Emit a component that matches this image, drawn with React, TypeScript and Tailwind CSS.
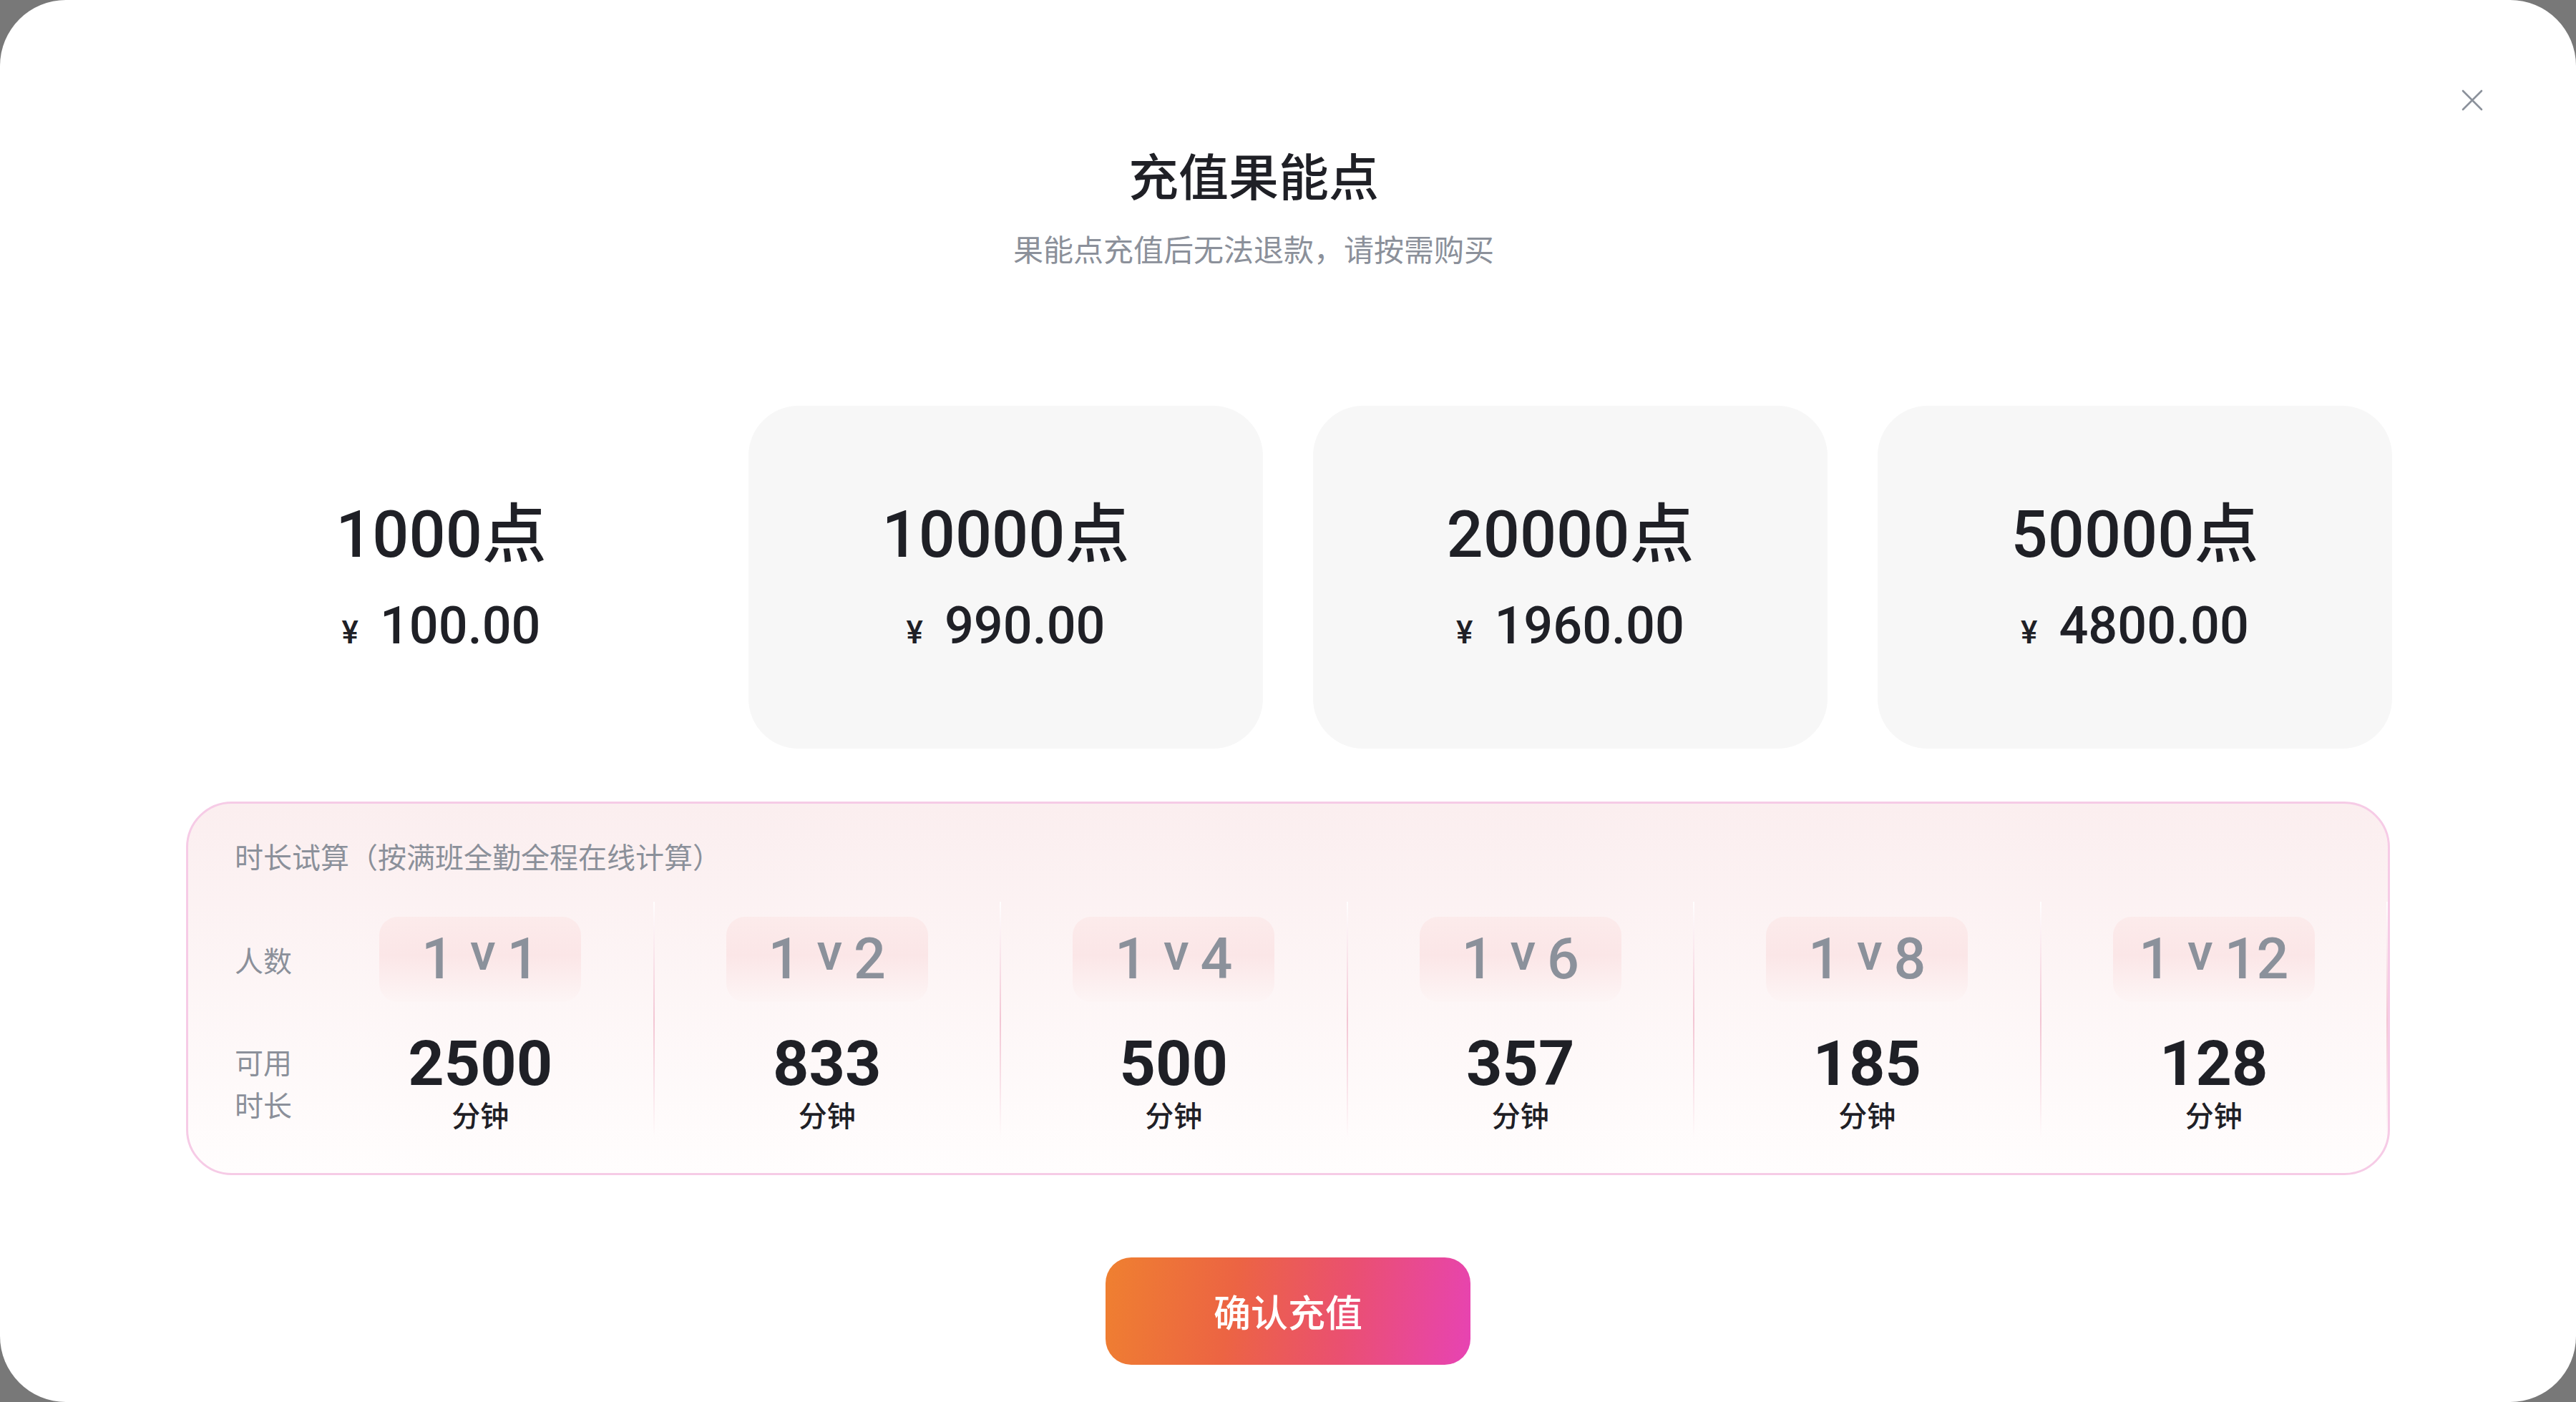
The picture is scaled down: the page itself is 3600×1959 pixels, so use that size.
import React from "react";

const cards = [
  { pts: "1000", price: "100.00", active: false },
  { pts: "10000", price: "990.00", active: true },
  { pts: "20000", price: "1960.00", active: true },
  { pts: "50000", price: "4800.00", active: true },
];

const cols = [
  { n: "1", mins: "2500" },
  { n: "2", mins: "833" },
  { n: "4", mins: "500" },
  { n: "6", mins: "357" },
  { n: "8", mins: "185" },
  { n: "12", mins: "128" },
];

function Card({ pts, price, active }: { pts: string; price: string; active: boolean }) {
  return (
    <div
      className={
        "flex-1 h-[479px] rounded-[70px] flex flex-col items-center justify-center gap-[46px] " +
        (active ? "bg-[#f7f7f7]" : "bg-white")
      }
    >
      <div className="h-[90px] text-[90px] leading-[90px] font-medium text-[#1f2026] font-['Roboto','Noto_Sans_CJK_SC',sans-serif]">
        {pts}点
      </div>
      <div className="h-[72px] flex items-baseline text-[#1f2026] font-['Roboto','Noto_Sans_CJK_SC',sans-serif]">
        <span className="text-[44px] leading-[72px] font-medium">¥</span>
        <span className="ml-[30px] text-[72px] leading-[72px] font-medium">{price}</span>
      </div>
    </div>
  );
}

function Column({ n, mins }: { n: string; mins: string }) {
  return (
    <div className="flex-1 flex flex-col items-center pt-[21px]">
      <div className="w-[282px] h-[119px] rounded-[26px] bg-[linear-gradient(to_bottom,#fcebeb,#fbe6e7_45%,#fdf5f5)] flex items-center justify-center">
        <div className="flex items-baseline text-[#8b919b] font-medium font-['Roboto',sans-serif] leading-none">
          <span className="text-[79px]">1</span>
          <span className="text-[72px] ml-[23px] relative -top-[12px]">v</span>
          <span className="text-[79px] ml-[16px]">{n}</span>
        </div>
      </div>
      <div className="mt-[43px] h-[86px] text-[88px] leading-[86px] font-bold text-[#1f2026] font-['Roboto',sans-serif]">
        {mins}
      </div>
      <div className="mt-[8px] h-[40px] text-[40px] leading-[40px] font-medium text-[#1f2026] font-['Noto_Sans_CJK_SC',sans-serif]">
        分钟
      </div>
    </div>
  );
}

function Divider() {
  return (
    <div className="w-[2px] self-stretch bg-[linear-gradient(to_bottom,rgba(255,255,255,0.95),#f3c6d4_50%,rgba(255,255,255,0))]" />
  );
}

export default function App() {
  return (
    <div className="w-[3600px] h-[1959px] bg-[#787878]">
      <div className="relative w-full h-full bg-white rounded-[92px] flex flex-col items-center">
        <button className="absolute top-[125px] right-[130px] w-[30px] h-[30px] flex items-center justify-center">
          <svg width="30" height="30" viewBox="0 0 30 30" fill="none">
            <path d="M2 2 L28 28 M28 2 L2 28" stroke="#8b919b" strokeWidth="2.6" strokeLinecap="round" />
          </svg>
        </button>

        <div className="mr-[96px] flex flex-col items-center">
          <div className="mt-[209px] h-[70px] text-[70px] leading-[70px] font-medium text-[#1f2026] font-['Noto_Sans_CJK_SC',sans-serif]">
            充值果能点
          </div>
          <div className="mt-[47px] h-[42px] text-[42px] leading-[42px] text-[#8b909a] font-['Noto_Sans_CJK_SC',sans-serif]">
            果能点充值后无法退款，请按需购买
          </div>
        </div>

        <div className="mt-[199px] w-full px-[257px] flex gap-[70px]">
          {cards.map((c) => (
            <Card key={c.pts} {...c} />
          ))}
        </div>

        <div className="mt-[74px] w-[3080px] h-[522px] rounded-[64px] border-[3px] border-[#f6cbe6] bg-[linear-gradient(to_bottom,#fbeeef,#fffdfd)] pl-[65px] pt-[53px] flex flex-col">
          <div className="h-[40px] text-[40px] leading-[40px] text-[#8b909a] font-['Noto_Sans_CJK_SC',sans-serif]">
            时长试算（按满班全勤全程在线计算）
          </div>
          <div className="mt-[44px] h-[330px] flex">
            <div className="w-[102px] flex flex-col pt-[21px] text-[40px] leading-[40px] text-[#8b909a] font-['Noto_Sans_CJK_SC',sans-serif]">
              <div className="h-[119px] flex items-center">人数</div>
              <div className="mt-[53px] leading-[60px]">
                <div>可用</div>
                <div>时长</div>
              </div>
            </div>
            {cols.map((c) => (
              <React.Fragment key={c.n}>
                <Column {...c} />
                <Divider />
              </React.Fragment>
            ))}
          </div>
        </div>

        <button className="mt-[115px] w-[510px] h-[150px] rounded-[36px] bg-[linear-gradient(100deg,#ef8030,#ec6443_35%,#ea5070_65%,#e743b4)] flex items-center justify-center text-white text-[52px] leading-[52px] font-medium font-['Noto_Sans_CJK_SC',sans-serif]">
          确认充值
        </button>
      </div>
    </div>
  );
}
